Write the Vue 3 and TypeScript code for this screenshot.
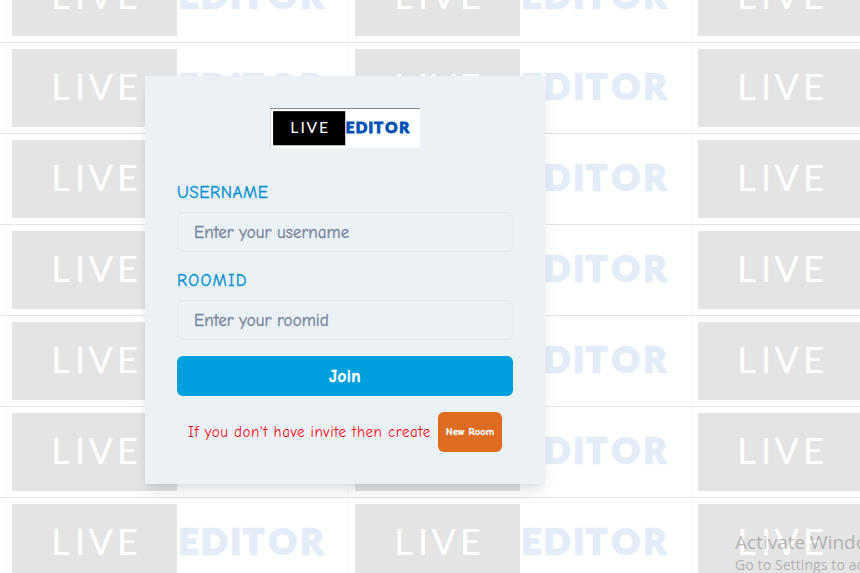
<script setup lang="ts">
import { ref } from 'vue'

const username = ref('')
const roomId = ref('')
const tiles = Array.from({ length: 32 }, (_, i) => i)
</script>

<template>
  <main class="page">
    <svg class="defs" width="0" height="0" aria-hidden="true">
      <defs>
        <symbol id="brand" viewBox="0 0 343 91">
          <rect width="343" height="91" fill="#fff" />
          <rect x="7" y="7" width="165" height="78" fill="#000" />
          <text class="live" x="46.2 70 83.6 112" y="58">LIVE</text>
          <text class="editor" x="173.5 196 225.5 238 263.7 295.5" y="57.4">EDITOR</text>
        </symbol>
      </defs>
    </svg>

    <div class="backdrop">
      <div v-for="t in tiles" :key="t" class="tile">
        <svg width="343" height="91"><use href="#brand" /></svg>
      </div>
    </div>

    <form class="card" @submit.prevent>
      <div class="logo"><svg width="150" height="40"><use href="#brand" /></svg></div>
      <label class="label" for="username"><span class="user-label">USERNAME</span></label>
      <input id="username" v-model="username" class="field" placeholder="Enter your username" />
      <label class="label second" for="room"><span class="room-label">ROOMID</span></label>
      <input id="room" v-model="roomId" class="field" placeholder="Enter your roomid" />
      <button class="join" type="submit">Join</button>
      <div class="invite">
        <span class="hint">If you don't have invite then create</span>
        <button class="new-room" type="button">New Room</button>
      </div>
    </form>

    <aside class="activation">
      <div class="activate-title">Activate Windows</div>
      <div class="activate-text">Go to Settings to activate Windows.</div>
    </aside>
  </main>
</template>

<style>
body {
  margin: 0;
  overflow: hidden;
}
</style>

<style scoped>
* {
  box-sizing: border-box;
}
.page {
  position: relative;
  display: flex;
  align-items: flex-start;
  justify-content: center;
  width: 860px;
  height: 573px;
  padding: 76px 170px 0 0;
  overflow: hidden;
  background: #fff;
  font-family: "Comic Sans MS", "Comic Neue", "Noto Sans", sans-serif;
}
.defs {
  position: absolute;
}
.live {
  fill: #fff;
  font: 400 36px Lato, sans-serif;
}
.editor {
  fill: #0050b4;
  stroke: #0050b4;
  stroke-width: 2.3;
  font: 900 34.5px Lato, sans-serif;
}
.backdrop {
  position: absolute;
  top: -49px;
  left: -338px;
  display: grid;
  grid-template-columns: repeat(4, 343px);
  grid-auto-rows: 91px;
  opacity: 0.1;
}
.tile {
  position: relative;
}
.tile svg,
.logo svg {
  display: block;
}
.tile::after {
  content: "";
  position: absolute;
  inset: 0;
  border-top: 1px solid #000;
  border-left: 1px solid #bbb;
}
.card {
  position: relative;
  display: flex;
  flex-direction: column;
  width: 400px;
  height: 408px;
  padding: 32px;
  background: #ecf1f6;
  box-shadow: 0 10px 15px -3px rgba(0, 0, 0, 0.1), 0 4px 6px -2px rgba(0, 0, 0, 0.05);
}
.logo {
  position: relative;
  align-self: center;
  width: 150px;
  height: 40px;
}
.logo::after {
  content: "";
  position: absolute;
  inset: 0;
  border-top: 1px solid #85888c;
  border-left: 1px solid #d0d3d6;
}
.label {
  height: 24px;
  margin-top: 32px;
  margin-bottom: 8px;
  color: #0090d0;
  font-size: 17px;
  line-height: 25px;
  -webkit-text-stroke: 0.35px currentColor;
}
.label.second {
  margin-top: 16px;
}
.user-label {
  letter-spacing: 0.55px;
}
.room-label {
  letter-spacing: 1.2px;
}
.field {
  width: 100%;
  height: 40px;
  padding: 0 16px;
  border: 1px solid #e2e8ee;
  border-radius: 6px;
  outline: none;
  background: transparent;
  color: #4a5568;
  font: 500 17px "Comic Sans MS", "Comic Neue", "Noto Sans", sans-serif;
}
.field::placeholder {
  color: #76849c;
  opacity: 1;
  letter-spacing: 0.06px;
  -webkit-text-stroke: 0.35px currentColor;
}
.join,
.new-room {
  border: 0;
  border-radius: 6px;
  color: #fff;
  font-family: inherit;
  font-weight: 700;
}
.join {
  height: 40px;
  margin-top: 16px;
  padding-top: 2px;
  background: #00a0df;
  font-size: 17px;
  letter-spacing: 0.5px;
  -webkit-text-stroke: 0.5px currentColor;
}
.invite {
  display: flex;
  align-items: center;
  justify-content: center;
  gap: 8px;
  margin-top: 16px;
}
.hint {
  width: 242px;
  color: #ff0b12;
  font-size: 15px;
  letter-spacing: 0.54px;
  white-space: nowrap;
}
.new-room {
  width: 64px;
  height: 40px;
  padding: 0;
  background: #dd6b20;
  font-size: 10.5px;
  letter-spacing: 0.1px;
  white-space: nowrap;
  -webkit-text-stroke: 0.3px currentColor;
}
.activation {
  position: absolute;
  top: 530px;
  left: 735px;
  color: rgba(125, 125, 125, 0.5);
  font-family: "Segoe UI", "Open Sans", sans-serif;
  white-space: nowrap;
}
.activate-title {
  font-size: 19px;
  line-height: 25px;
}
.activate-text {
  font-size: 14px;
  line-height: 20px;
  letter-spacing: 0.1px;
}
</style>
